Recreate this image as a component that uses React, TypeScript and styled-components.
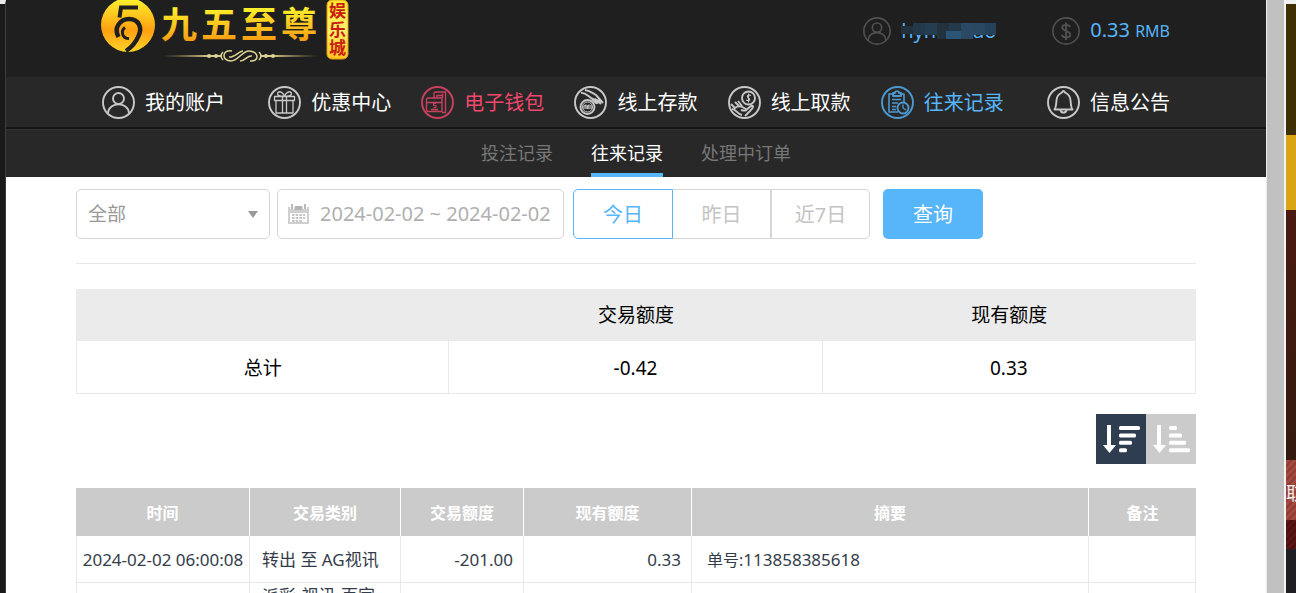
import React from "react";
import styled, { createGlobalStyle, css } from "styled-components";

const GlobalStyle = createGlobalStyle`
  * { box-sizing: border-box; }
  body {
    margin: 0;
    background: #fff;
    font-family: "Noto Sans", "Noto Sans CJK SC", sans-serif;
    color: #000;
  }
  button, input, select { font-family: inherit; }
`;

const blue = "#57b5fa";

const Screen = styled.div`
  display: flex;
  height: 100vh;
  overflow: hidden;
`;

const LeftEdge = styled.div`
  flex: 0 0 6px;
  background: #1a1a1a;
  border-top: 4px solid #e8e8e8;
  border-right: 1px solid #3c3c3c;
`;

const Page = styled.div`
  flex: 1;
  min-width: 0;
  overflow: hidden;
`;

const ScrollTrack = styled.div`
  flex: 0 0 20px;
  background: #c1c1c1;
  border-left: 1px solid #ececec;
  border-right: 2px solid #f4f4f4;
`;

const RightEdge = styled.div`
  flex: 0 0 10px;
  display: flex;
  flex-direction: column;
  overflow: hidden;
  border-top: 4px solid #f0f0f0;
`;

const Band = styled.div<{ $h?: number; $bg: string }>`
  flex: ${(p) => (p.$h ? `0 0 ${p.$h}px` : "1")};
  background: ${(p) => p.$bg};
  color: #eee;
  font-size: 18px;
  line-height: 66px;
  white-space: nowrap;
  overflow: hidden;
`;

const Inner = styled.div`
  max-width: 1068px;
  margin: 0 auto;
  display: flex;
`;

const Header = styled.header`
  height: 77px;
  background: #1f1f1f;
`;

const Brand = styled.a`
  flex: 1;
  height: 77px;
`;

const Account = styled.div`
  display: flex;
  align-items: center;
  gap: 10px;
  height: 61px;
  margin-left: 56px;
  color: ${blue};
  font-size: 20px;
  line-height: 28px;
  white-space: nowrap;
  small { font-size: 16px; }
`;

const UserName = styled.span`
  position: relative;
  display: flex;
  justify-content: space-between;
  width: 95px;
`;

const Mosaic = styled.svg`
  position: absolute;
  left: 0;
  top: 6px;
`;

const Nav = styled.nav`
  background: #282828;
  border-bottom: 2px solid #141414;
`;

const NavRow = styled(Inner)`
  justify-content: space-between;
  a:first-child { margin-right: 13px; }
  a:last-child { margin-left: 13px; }
`;

const NavLink = styled.a<{ $color?: string }>`
  display: flex;
  align-items: center;
  gap: 10px;
  height: 50px;
  color: ${(p) => p.$color || "#fff"};
  font-size: 20px;
  line-height: 28px;
  text-decoration: none;
  white-space: nowrap;
  svg { color: ${(p) => p.$color || "#c8c8c8"}; opacity: ${(p) => (p.$color ? 0.8 : 1)}; }
  span { padding-top: 2px; }
`;

const SubNav = styled.nav`
  display: flex;
  justify-content: center;
  gap: 38px;
  height: 48px;
  background: #282828;
  border-top: 1px solid #333;
`;

const SubLink = styled.a<{ $active?: boolean }>`
  height: 47px;
  color: ${(p) => (p.$active ? "#fff" : "#777")};
  font-size: 18px;
  line-height: 46px;
  text-decoration: none;
  border-bottom: ${(p) => (p.$active ? `4px solid ${blue}` : "0")};
`;

const Content = styled.main`
  max-width: 1120px;
  margin: 0 auto;
  padding-top: 12px;
`;

const Filters = styled.form`
  display: flex;
  height: 75px;
  border-bottom: 1px solid #e8e8e8;
`;

const field = css`
  height: 50px;
  border: 1px solid #d6d6d6;
  border-radius: 5px;
  background: #fff;
`;

const SelectBox = styled.label`
  ${field}
  display: flex;
  align-items: center;
  width: 194px;
  padding-right: 10px;
  margin-right: 7px;
  select {
    flex: 1;
    height: 48px;
    padding: 0 0 0 11px;
    border: 0;
    background: transparent;
    appearance: none;
    font-size: 19px;
    color: #999;
    outline: none;
  }
`;

const DateBox = styled.label`
  ${field}
  display: flex;
  align-items: center;
  gap: 10px;
  width: 287px;
  padding-left: 9px;
  margin-right: 9px;
  input {
    flex: 1;
    min-width: 0;
    height: 48px;
    padding: 0 0 2px;
    border: 0;
    background: transparent;
    font-size: 20px;
    color: #b0b0b0;
    outline: none;
  }
`;

const Segments = styled.div`
  display: flex;
  margin-right: 13px;
`;

const Segment = styled.button<{ $active?: boolean }>`
  width: 98px;
  height: 50px;
  padding: 0 0 2px;
  background: #fff;
  border: 1px solid ${(p) => (p.$active ? blue : "#d6d6d6")};
  color: ${(p) => (p.$active ? blue : "#c4c4c4")};
  font-size: 20px;
  &:first-child { width: 100px; border-radius: 5px 0 0 5px; }
  &:not(:first-child) { border-left: 0; }
  &:last-child { width: 99px; border-left: 1px solid #d6d6d6; border-radius: 0 5px 5px 0; }
`;

const Submit = styled.button`
  width: 100px;
  height: 50px;
  padding: 0 0 2px;
  border: 0;
  border-radius: 5px;
  background: ${blue};
  color: #fff;
  font-size: 20px;
`;

const table = css`
  width: 100%;
  border-collapse: separate;
  border-spacing: 0;
  table-layout: fixed;
  td { border: 1px solid #e8e8e8; border-width: 0 1px 1px 0; }
  td:first-child { border-left-width: 1px; }
`;

const Summary = styled.table`
  ${table}
  margin-top: 25px;
  font-size: 19px;
  line-height: 28px;
  text-align: center;
  th { height: 52px; padding: 0; background: #ebebeb; font-weight: 400; }
  td { height: 53px; padding: 2px 0 0; }
`;

const SortBar = styled.div`
  display: flex;
  justify-content: flex-end;
  margin: 20px 0 24px;
`;

const SortButton = styled.button<{ $active?: boolean }>`
  width: 50px;
  height: 50px;
  padding: 0;
  border: 0;
  background: ${(p) => (p.$active ? "#2f3d50" : "#cbcbcb")};
  svg { display: block; }
`;

const Records = styled.table`
  ${table}
  color: #333c48;
  font-size: 17px;
  line-height: 22px;
  th {
    height: 48px;
    padding: 2px 0 0;
    background: #cbcbcb;
    color: #fff;
    font-size: 16px;
    font-weight: 700;
    border-right: 1px solid #fff;
  }
  th:last-child { border-right: 0; }
  td { height: 47px; padding: 2px 12px 0; white-space: nowrap; }
  td:first-child { padding: 2px 0 0; text-align: center; }
  td:nth-child(3), td:nth-child(4) { padding: 2px 10px 0; text-align: right; }
  td:nth-child(5) { padding-left: 15px; }
`;

const Label = styled.span`
  font-size: 16px;
`;

function Logo() {
  return (
    <svg width="250" height="64" viewBox="102 0 250 64" role="img" aria-label="九五至尊娱乐城" overflow="visible">
      <defs>
        <linearGradient id="gold" x1="0" y1="0" x2="0" y2="1">
          <stop offset="0" stopColor="#fff32e" />
          <stop offset="0.6" stopColor="#ff9f10" />
          <stop offset="1" stopColor="#ffd52a" />
        </linearGradient>
        <linearGradient id="goldText" x1="0" y1="8" x2="0" y2="42" gradientUnits="userSpaceOnUse">
          <stop offset="0" stopColor="#fff02c" />
          <stop offset="1" stopColor="#f79a12" />
        </linearGradient>
        <linearGradient id="rule" x1="163" x2="318" y1="0" y2="0" gradientUnits="userSpaceOnUse">
          <stop offset="0" stopColor="#b9a456" stopOpacity="0" />
          <stop offset="0.3" stopColor="#d8cc8a" />
          <stop offset="0.7" stopColor="#d8cc8a" />
          <stop offset="1" stopColor="#b9a456" stopOpacity="0" />
        </linearGradient>
        <linearGradient id="badge" x1="0" y1="0" x2="0" y2="1">
          <stop offset="0" stopColor="#ffe92c" />
          <stop offset="0.5" stopColor="#fff36a" />
          <stop offset="1" stopColor="#ffc41c" />
        </linearGradient>
      </defs>
      <circle cx="128" cy="25" r="27" fill="url(#gold)" />
      <g fill="none" stroke="#1f1f1f" strokeWidth="4">
        <path d="M138 7.500H121L119.500 17.500" />
        <path d="M118.500 37C113 27 121 19 129 19C139 19 142.500 28 138.500 36C136 42 132 47 126 51" strokeWidth="4.500" />
        <path d="M129 38.500C122 38.500 120.500 31 125 27.500" strokeWidth="3" />
      </g>
      <g fontFamily='"Noto Sans CJK SC", sans-serif' fontWeight="700">
        <text x="161 201 241 281" y="38" fontSize="36" fill="url(#goldText)">九五至尊</text>
        <rect x="327" y="0" width="21" height="59" rx="5" fill="url(#badge)" stroke="#e79a12" />
        <g fontSize="17" fill="#c91d12" textAnchor="middle">
          <text x="337.5" y="17">娱</text>
          <text x="337.5" y="36">乐</text>
          <text x="337.5" y="54">城</text>
        </g>
      </g>
      <path d="M163 56H222M260 56H318" stroke="url(#rule)" strokeWidth="2" />
      <g fill="none" stroke="#e0d494" strokeWidth="1.5">
        <path d="M232 51C222 49 221 61 231 61C238 61 242 51 249 51C259 51 260 62 250 61M229 57C234 58 239 51 243 51M240 61C246 61 247 55 252 56" />
        <path d="M223 52Q219 56 223 60M259 52Q263 56 259 60" />
      </g>
      <g fill="#e0d494"><circle cx="209" cy="56" r="2" /><circle cx="216" cy="56" r="2" /><circle cx="266" cy="56" r="2" /><circle cx="273" cy="56" r="2" /></g>
    </svg>
  );
}

const glyphs: Record<string, React.ReactNode> = {
  user: <><circle cx="16.5" cy="12.5" r="5.5" /><path d="M6 27C7 15.500 26 15.500 27 27" /></>,
  gift: <><path d="M8 14.500H25V27H8ZM6.500 10.500H26.500V14.500H6.500ZM14.500 11V27M18.500 11V27M16 10C11 11 8.500 8.500 10 6.500C12 4.500 15 7 16.500 10C18 7 21 4.500 23 6.500C24.500 8.500 22 11 17 10" strokeWidth="1.300" /></>,
  wallet: <><path d="M13 12V7.500Q13 6 14.500 6H24.500V26.500H21M16 12V9.500H21.500V12M21.500 7.500V10M5.500 13.500Q5.500 12 7 12H21V25.500H7Q5.500 25.500 5.500 24ZM5.500 16.500H21M10 23.500H17" strokeWidth="1.400" /><path d="M15 17.500H12.500V19.500H15V21.500H12.500" strokeWidth="1.100" /></>,
  deposit: <><circle cx="13.500" cy="21" r="7" /><circle cx="13.500" cy="21" r="5" strokeWidth="1" /><path d="M10 23V20L12 19V23M13.500 23V20L15 19V23M17 19V23" strokeWidth="1.200" /><path d="M7 7C12 6 14 11 19 13L29 16M11 4C17 5 18 7 22 9L29 17M18 13L22 17C24 18 24 16 21 13M22 14L27 18" /></>,
  withdraw: <><circle cx="20.500" cy="12" r="6.500" /><path d="M23 9.500C20 8.500 18 10 20.500 12C23 14 21 15.500 18 14M20.500 7.500V16.500" strokeWidth="1.200" /><path d="M3 18L7 22C11 19 15 21 17 22.500C20 24 18 25.500 13 24M7 16L11 20M10 15L14 20M18 24L23 20C26 19 26 21 22 25L17 30M4 23C8 23 9 28 14 29" /></>,
  record: <><path d="M13 8H8V26H17M19 8H23V16M11 13.500H20M11 17H17M11 20.500H15M11 23.500H15" strokeWidth="1.600" /><path d="M12 10V7H14C14 4.500 18 4.500 18 7H20V10Z" /><circle cx="22" cy="22" r="5.500" /><path d="M22 18.500V22L25 24" strokeWidth="1.300" /></>,
  bell: <><path d="M7.500 23.500C9 22 9 20 9.500 14C10 8.500 13 7.500 15 6.500Q16.500 3.500 18 6.500C20 7.500 23 8.500 23.500 14C24 20 24 22 25.500 23.500Z" /><path d="M13.500 24C14 27.500 19 27.500 19.500 24" /></>,
  dollar: <path d="M21.500 12C20 8 12 8.500 12 12.500C12 17 21.500 15.500 21.500 20.500C21.500 25 13 25 11.500 21M16.500 6.500V27" strokeWidth="2.200" />,
};

function RoundIcon({ name, size = 33 }: { name: string; size?: number }) {
  return (
    <svg width={size} height={size} viewBox="0 0 33 33" fill="none" stroke="currentColor" strokeWidth="1.900" strokeLinejoin="round" aria-hidden="true">
      <circle cx="16.5" cy="16.5" r="15.500" />
      {glyphs[name]}
    </svg>
  );
}

const Muted = styled.span`
  display: flex;
  color: #505050;
`;

function SortIcon({ rows }: { rows: number[] }) {
  return (
    <svg width="50" height="50" viewBox="0 0 50 50" aria-hidden="true">
      <path d="M11 11H15V31H20L13.500 39L7 31H11Z" fill="#fff" />
      {rows.map((w, i) => (
        <rect key={i} x="23" y={12 + i * 7.4} width={w} height="4" rx="1.500" fill="#fff" />
      ))}
    </svg>
  );
}

const navItems = [
  { icon: "user", text: "我的账户" },
  { icon: "gift", text: "优惠中心" },
  { icon: "wallet", text: "电子钱包", color: "#f0476c" },
  { icon: "deposit", text: "线上存款" },
  { icon: "withdraw", text: "线上取款" },
  { icon: "record", text: "往来记录", color: blue },
  { icon: "bell", text: "信息公告" },
];

const mosaic = ["#22303c", "#23394a", "#243d50", "#22333f", "#243a4b", "#294964", "#2a4861", "#26415a"];

export default function App() {
  return (
    <>
      <GlobalStyle />
      <Screen>
        <LeftEdge />
        <Page>
          <Header>
            <Inner>
              <Brand href="#"><Logo /></Brand>
              <Account>
                <Muted><RoundIcon name="user" size={28} /></Muted>
                <UserName>
                  <span>hyh</span><span>ao</span>
                  <Mosaic width="95" height="16" aria-hidden="true">
                    {mosaic.map((c, i) => (
                      <rect key={i} x={i * 12} y={i === 0 ? 3 : 0} width="12" height={i === 0 ? 8 : i > 2 && i < 6 ? 16 : 12} fill={c} />
                    ))}
                    <rect x="45" y="8" width="15" height="8" fill="#2b5577" />
                  </Mosaic>
                </UserName>
              </Account>
              <Account>
                <Muted><RoundIcon name="dollar" size={28} /></Muted>
                <span>0.33 <small>RMB</small></span>
              </Account>
            </Inner>
          </Header>
          <Nav>
            <NavRow>
              {navItems.map((n) => (
                <NavLink key={n.text} href="#" $color={n.color}>
                  <RoundIcon name={n.icon} />
                  <span>{n.text}</span>
                </NavLink>
              ))}
            </NavRow>
          </Nav>
          <SubNav>
            <SubLink href="#">投注记录</SubLink>
            <SubLink href="#" $active>往来记录</SubLink>
            <SubLink href="#">处理中订单</SubLink>
          </SubNav>
          <Content>
            <Filters onSubmit={(e) => e.preventDefault()}>
              <SelectBox>
                <select aria-label="交易类别"><option>全部</option></select>
                <svg width="12" height="8" aria-hidden="true"><path d="M1 1H11L6 8Z" fill="#999" /></svg>
              </SelectBox>
              <DateBox>
                <svg width="23" height="22" viewBox="0 0 23 22" aria-hidden="true">
                  <path d="M1 4H22V21H1Z" fill="#cfcfcf" />
                  <path d="M3 10H20V19H3Z" fill="#fff" />
                  <path d="M5 12H18M5 15H18M5 18H16" stroke="#c4c4c4" strokeWidth="2" strokeDasharray="2.500 1.200" />
                  <path d="M5 0V6M18 0V6" stroke="#fff" strokeWidth="4" />
                  <path d="M5 1V6M18 1V6" stroke="#bbb" strokeWidth="2" />
                  <path d="M8 3H15V7H8Z" fill="#b4b4b4" />
                </svg>
                <input aria-label="日期" defaultValue="2024-02-02 ~ 2024-02-02" />
              </DateBox>
              <Segments>
                <Segment type="button" $active>今日</Segment>
                <Segment type="button">昨日</Segment>
                <Segment type="button">近7日</Segment>
              </Segments>
              <Submit type="submit">查询</Submit>
            </Filters>
            <Summary>
              <thead><tr><th /><th>交易额度</th><th>现有额度</th></tr></thead>
              <tbody><tr><td>总计</td><td>-0.42</td><td>0.33</td></tr></tbody>
            </Summary>
            <SortBar>
              <SortButton type="button" $active aria-label="降序"><SortIcon rows={[21, 17, 13, 8]} /></SortButton>
              <SortButton type="button" aria-label="升序"><SortIcon rows={[8, 13, 17, 21]} /></SortButton>
            </SortBar>
            <Records>
              <colgroup>
                <col width="174" /><col width="151" /><col width="123" /><col width="168" /><col /><col width="107" />
              </colgroup>
              <thead>
                <tr><th>时间</th><th>交易类别</th><th>交易额度</th><th>现有额度</th><th>摘要</th><th>备注</th></tr>
              </thead>
              <tbody>
                <tr>
                  <td>2024-02-02 06:00:08</td>
                  <td>转出 至 AG视讯</td>
                  <td>-201.00</td>
                  <td>0.33</td>
                  <td><Label>单号:</Label>113858385618</td>
                  <td />
                </tr>
                <tr>
                  <td />
                  <td>派彩-视讯-百家<br />乐</td>
                  <td /><td /><td /><td />
                </tr>
              </tbody>
            </Records>
          </Content>
        </Page>
        <ScrollTrack />
        <RightEdge>
          <Band $h={131} $bg="#3f3003" />
          <Band $h={75} $bg="#d9a516" />
          <Band $h={250} $bg="linear-gradient(#4a1a10, #33190f)" />
          <Band $h={60} $bg="repeating-linear-gradient(135deg, #a34a40 0 3px, #8f3c34 3px 5px)">取</Band>
          <Band $h={29} $bg="repeating-linear-gradient(135deg, #5a1414 0 3px, #4c1010 3px 5px)" />
          <Band $bg="#1d1f22" />
        </RightEdge>
      </Screen>
    </>
  );
}
